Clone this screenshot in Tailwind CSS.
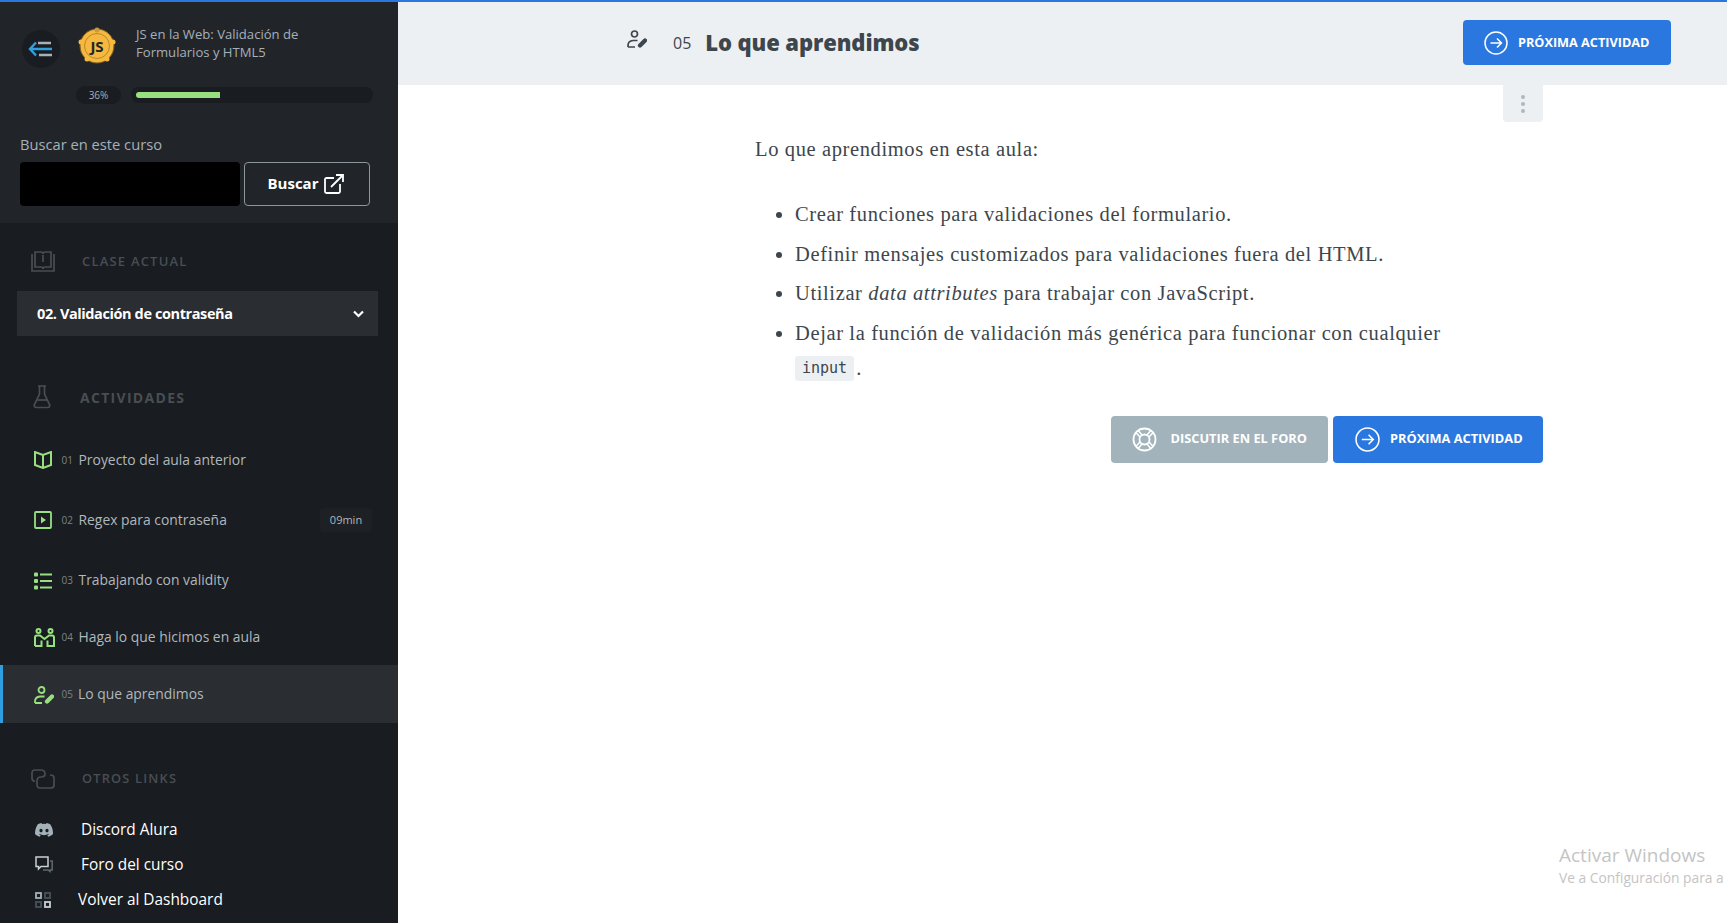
<!DOCTYPE html>
<html lang="es">
<head>
    <meta charset="UTF-8">
    <meta name="viewport" content="width=device-width, initial-scale=1.0">
    <title>Lo que aprendimos</title>
    <script src="https://cdn.jsdelivr.net/npm/@tailwindcss/browser@4"></script>
</head>
<body class="relative h-[923px] overflow-hidden bg-white font-['Open_Sans',sans-serif]">
    <div class="h-[2px] bg-[#2a77e0]"></div>
    <div class="flex h-[921px]">
        <!-- Sidebar -->
        <aside class="w-[398px] shrink-0 bg-[#191c20] flex flex-col">
            <div class="h-[221px] bg-[#21252a] pt-[28px]">
                <div class="flex items-center pl-[22px]">
                    <div class="w-[38px] h-[38px] rounded-full bg-[#191c20] flex items-center justify-center">
                        <svg width="26" height="16" viewBox="0 0 26 16" fill="none" stroke-width="2.4">
                            <path d="M8 1.5 2 8l6 6.5M2 8h22" stroke="#2f9fe0"/>
                            <path d="M10 2h13M11 14h13" stroke="#a3b1b9"/>
                        </svg>
                    </div>
                    <svg class="ml-[17px] self-start -mt-[4px]" width="40" height="40" viewBox="0 0 40 40">
                        <circle cx="20" cy="20" r="17" fill="#f6b83f" stroke="#7a5a1e" stroke-width="1"/>
                        <circle cx="20" cy="4" r="2.5" fill="#c79a45"/>
                        <circle cx="4" cy="16" r="2.5" fill="#f6b83f"/>
                        <circle cx="36" cy="16" r="2.5" fill="#f6b83f"/>
                        <circle cx="10" cy="33" r="2.5" fill="#f6b83f"/>
                        <circle cx="30" cy="33" r="2.5" fill="#f6b83f"/>
                        <circle cx="20" cy="20" r="12.5" fill="none" stroke="#a97c25" stroke-width="0.8"/>
                        <text x="20" y="25.500" text-anchor="middle" font-family="Open Sans" font-weight="700" font-size="15" fill="#21252a">JS</text>
                    </svg>
                    <p class="ml-[19px] self-start -mt-[5px] w-[200px] text-[13.1px] leading-[18px] text-[#a5b0b8]">JS en la Web: Validación de Formularios y HTML5</p>
                </div>
                <div class="flex items-center mt-[18px] pl-[76px]">
                    <div class="w-[45px] h-[18px] rounded-full bg-[#191c20] text-[10px] leading-[18px] text-center text-[#a5b0b8]">36%</div>
                    <div class="ml-[10px] w-[242px] h-[16px] rounded-full bg-[#191c20] flex items-center pl-[5px]">
                        <div class="w-[84px] h-[6px] rounded-l-full bg-[#98e07f]"></div>
                    </div>
                </div>
                <label class="block mt-[30px] ml-[20px] text-[14.7px] leading-[20px] text-[#a5b0b8]">Buscar en este curso</label>
                <div class="flex mt-[8px] ml-[20px] gap-[4px]">
                    <div class="w-[220px] h-[44px] rounded-[4px] bg-black"></div>
                    <button class="w-[126px] h-[44px] rounded-[4px] border border-[#8b969d] flex items-center justify-center gap-[6px] pr-[2px] pb-[1px] text-white text-[15px] font-bold">
                        Buscar
                        <svg width="20" height="20" viewBox="0 0 20 20" fill="none" stroke="#fff" stroke-width="1.8">
                            <path d="M10 4H2.5A1.5 1.5 0 0 0 1 5.500V17.500A1.500 1.500 0 0 0 2.500 19H14.500A1.500 1.500 0 0 0 16 17.500V10"/>
                            <path d="M7 13 19 1M12 1h7v7"/>
                        </svg>
                    </button>
                </div>
            </div>

            <!-- Clase actual -->
            <div class="flex items-center h-[24px] mt-[27px] pl-[31px]">
                <svg width="24" height="22" viewBox="0 0 24 22" fill="none" stroke="#484e53" stroke-width="1.7">
                    <path d="M1 3v17h22V3"/>
                    <path d="M4 1h6a2 2 0 0 1 2 2 2 2 0 0 1 2-2h6v15h-6a2 2 0 0 0-2 2 2 2 0 0 0-2-2H4z"/>
                    <path d="M12 4v7"/>
                </svg>
                <span class="ml-[27px] text-[13px] font-semibold tracking-[1.2px] text-[#484e53]">CLASE ACTUAL</span>
            </div>
            <div class="mt-[17px] ml-[17px] w-[361px] h-[45px] bg-[#2a2d31] flex items-center justify-between pl-[20px] pr-[14px] text-white">
                <span class="text-[14.5px] font-bold tracking-[-0.4px]">02. Validación de contraseña</span>
                <svg width="11" height="8" viewBox="0 0 11 8" fill="none" stroke="#fff" stroke-width="2.200"><path d="M1 1.500 5.500 6 10 1.500"/></svg>
            </div>

            <!-- Actividades -->
            <div class="flex items-center h-[26px] mt-[48px] pl-[33px]">
                <svg width="18" height="24" viewBox="0 0 18 24" fill="none" stroke="#484e53" stroke-width="1.700">
                    <path d="M5 1h8M6.500 1v8L1.500 19.500A2 2 0 0 0 3.300 22.500H14.700A2 2 0 0 0 16.500 19.500L11.500 9V1"/>
                    <path d="M4 15h10"/>
                </svg>
                <span class="ml-[29px] text-[14px] font-bold tracking-[1.3px] text-[#484e53]">ACTIVIDADES</span>
            </div>

            <ul class="mt-[20px] text-[13.9px] text-[#b0b8bd]">
                <li class="h-[60px] flex items-center pl-[34px]">
                    <svg class="w-[18px]" width="18" height="18" viewBox="0 0 18 18" fill="none" stroke="#98e07f" stroke-width="2"><path d="M9 4 1 1v13l8 3 8-3V1zM9 4v13"/></svg>
                    <span class="w-[17px] ml-[9.500px] text-[10px] text-[#7b8489]">01</span>
                    <span>Proyecto del aula anterior</span>
                </li>
                <li class="h-[60px] flex items-center pl-[34px] pr-[26px]">
                    <svg class="w-[18px]" width="18" height="18" viewBox="0 0 18 18" fill="none" stroke="#98e07f" stroke-width="1.800"><rect x="1" y="1" width="16" height="16" rx="1"/><path d="M7 5.500v7l5-3.500z" fill="#98e07f" stroke="none"/></svg>
                    <span class="w-[17px] ml-[9.500px] text-[10px] text-[#7b8489]">02</span>
                    <span>Regex para contraseña</span>
                    <span class="ml-auto w-[52px] h-[24px] rounded bg-[#1d2024] text-[11px] leading-[24px] text-center">09min</span>
                </li>
                <li class="h-[59px] flex items-center pl-[34px] pt-[2px]">
                    <svg class="w-[18px]" width="18" height="18" viewBox="0 0 18 18" fill="#98e07f"><rect x="0" y="0.500" width="4" height="4" rx="1"/><rect x="0" y="7" width="4" height="4" rx="1"/><rect x="0" y="13.500" width="4" height="4" rx="1"/><rect x="6" y="1.500" width="12" height="2"/><rect x="6" y="8" width="12" height="2"/><rect x="6" y="14.500" width="12" height="2"/></svg>
                    <span class="w-[17px] ml-[9.500px] text-[10px] text-[#7b8489]">03</span>
                    <span>Trabajando con validity</span>
                </li>
                <li class="h-[56px] flex items-center pl-[34px]">
                    <svg class="w-[21px] -mr-[3px]" width="21" height="19" viewBox="0 0 21 19" fill="none" stroke="#98e07f" stroke-width="2"><circle cx="4.500" cy="3" r="2"/><circle cx="16.500" cy="3" r="2"/><path d="M1 18V9.500Q1 7.500 3 7.500H6L10.500 11 15 7.500H18Q20 7.500 20 9.500V18H13.500V12.500M1 18H7.500V12.500"/></svg>
                    <span class="w-[17px] ml-[9.500px] text-[10px] text-[#7b8489]">04</span>
                    <span>Haga lo que hicimos en aula</span>
                </li>
                <li class="h-[58px] flex items-center pl-[31px] pt-[1px] bg-[#2a2d31] border-l-[3px] border-[#2f9fe0]">
                    <svg class="w-[20px] -mr-[2px]" width="20" height="18" viewBox="0 0 20 18" fill="none" stroke="#98e07f" stroke-width="1.800"><circle cx="7.500" cy="4" r="3"/><path d="M1 17v-1.500Q1 11 6 10.500h4.500M1 17h7"/><path d="M13 15.500 18 10.500" stroke-width="4.200" stroke-linecap="round"/></svg>
                    <span class="w-[16.500px] ml-[9.500px] text-[10px] text-[#7b8489]">05</span>
                    <span>Lo que aprendimos</span>
                </li>
            </ul>

            <!-- Otros links -->
            <div class="flex items-center h-[24px] mt-[44px] pl-[31px]">
                <svg width="24" height="21" viewBox="0 0 24 21" fill="none" stroke="#484e53" stroke-width="1.700">
                    <path d="M4 12.500Q1 12 1 9V4Q1 1 4 1h6Q14 1 14 5 14 8 10 8 6 8 6 12V15Q6 19 9 19H20Q23 19 23 16V9Q23 6 19 6"/>
                </svg>
                <span class="ml-[27px] text-[12.800px] font-semibold tracking-[1.200px] text-[#484e53]">OTROS LINKS</span>
            </div>
            <ul class="mt-[21px] text-[15.400px] font-medium text-white">
                <li class="h-[35px] flex items-center pl-[35px]">
                    <svg class="w-[18px]" width="18" height="14" viewBox="0 0 18 14" fill="#a3b1b9"><path d="M15.200 1.200A15 15 0 0 0 11.500 0l-.5 1a14 14 0 0 0-4 0L6.500 0a15 15 0 0 0-3.700 1.200C.5 4.700-.2 8 .1 11.300A15 15 0 0 0 4.700 13.700l1-1.500-1.600-.8.4-.3a10.500 10.500 0 0 0 9 0l.4.300-1.600.8 1 1.500a15 15 0 0 0 4.600-2.400c.4-3.800-.6-7.100-2.700-10.100zM6 9.300c-.9 0-1.600-.8-1.600-1.800S5.100 5.700 6 5.700s1.600.8 1.600 1.800S6.900 9.300 6 9.300zm6 0c-.9 0-1.600-.8-1.600-1.800s.7-1.800 1.600-1.800 1.600.8 1.600 1.800-.7 1.800-1.600 1.800z"/></svg>
                    <span class="ml-[28px]">Discord Alura</span>
                </li>
                <li class="h-[35px] flex items-center pl-[35px]">
                    <svg class="w-[18px]" width="18" height="18" viewBox="0 0 18 18" fill="none" stroke-width="1.500"><path d="M1 1h12v9.500H6L3.500 13v-2.500H1z" stroke="#c8d1d6"/><path d="M15 5h2.200v9H15v1.500L13 14H8" stroke="#5f696f"/></svg>
                    <span class="ml-[28px]">Foro del curso</span>
                </li>
                <li class="h-[35px] flex items-center pl-[35px]">
                    <svg class="w-[16px]" width="16" height="16" viewBox="0 0 16 16" fill="none" stroke-width="1.800"><rect x="1" y="1" width="5" height="5" stroke="#a3b1b9"/><rect x="10" y="1" width="5" height="5" stroke="#4a5257"/><rect x="1" y="10" width="5" height="5" stroke="#4a5257"/><rect x="10" y="10" width="5" height="5" stroke="#c8d1d6"/></svg>
                    <span class="ml-[27px]">Volver al Dashboard</span>
                </li>
            </ul>
        </aside>

        <!-- Main -->
        <main class="flex-1 min-w-0">
            <header class="h-[83px] bg-[#edf0f2] flex items-center pl-[229px] pr-[56px] pb-[2px] text-[#3d464d]">
                <svg class="-mt-[8px]" width="20" height="18" viewBox="0 0 20 18" fill="none" stroke="#3d464d" stroke-width="1.700"><circle cx="7.500" cy="4" r="3"/><path d="M1 17v-1.500Q1 11 6 10.500h4.500M1 17h7"/><path d="M13 15.500 18 10.500" stroke-width="4.200" stroke-linecap="round"/></svg>
                <span class="ml-[26px] text-[16px]">05</span>
                <h1 class="ml-[14px] text-[22px] font-extrabold tracking-[-0.1px]">Lo que aprendimos</h1>
                <a class="ml-auto w-[208px] h-[45px] rounded-[4px] bg-[#2a77e0] flex items-center pl-[21px] text-white text-[12.700px] font-bold">
                    <svg width="24" height="24" viewBox="0 0 24 24" fill="none" stroke="#fff" stroke-width="1.500"><circle cx="12" cy="12" r="11"/><path d="M6.500 12h11M13 7.500l4.500 4.500-4.500 4.500"/></svg>
                    <span class="ml-[10px]">PRÓXIMA ACTIVIDAD</span>
                </a>
            </header>
            <div class="ml-[357px] w-[788px]">
                <div class="flex justify-end">
                    <div class="w-[40px] h-[37px] rounded-b bg-[#edf0f2] flex flex-col items-center justify-center gap-[3px]">
                        <span class="w-1 h-1 rounded-full bg-[#adb7bd]"></span>
                        <span class="w-1 h-1 rounded-full bg-[#adb7bd]"></span>
                        <span class="w-1 h-1 rounded-full bg-[#adb7bd]"></span>
                    </div>
                </div>
                <div class="font-['Liberation_Serif',serif] text-[20.500px] tracking-[0.62px] text-[#3d464d]">
                    <p class="mt-[12px] leading-[30px]">Lo que aprendimos en esta aula:</p>
                    <ul class="mt-[33px] pl-[40px] list-disc leading-[35px] space-y-[4.500px]">
                        <li>Crear funciones para validaciones del formulario.</li>
                        <li>Definir mensajes customizados para validaciones fuera del HTML.</li>
                        <li>Utilizar <em>data attributes</em> para trabajar con JavaScript.</li>
                        <li>Dejar la función de validación más genérica para funcionar con cualquier<br><code class="inline-block -translate-y-[2px] font-['DejaVu_Sans_Mono',monospace] text-[15px] leading-[25px] tracking-normal bg-[#edf0f2] rounded-[3px] px-[7px]">input</code><span class="ml-[2px]">.</span></li>
                    </ul>
                </div>
                <div class="flex justify-end gap-[5px] mt-[30px] text-white text-[12.800px] font-bold">
                    <a class="w-[217px] h-[47px] rounded-[4px] bg-[#a2b3bc] flex items-center pl-[21px]">
                        <svg width="25" height="25" viewBox="0 0 25 25" fill="none" stroke="#fff" stroke-width="1.800">
                            <path d="M5 4.500 9 9M20 4.500 16 9M5 20.500 9 16M20 20.500 16 16" stroke-width="4.400"/>
                            <path d="M5 4.500 9 9M20 4.500 16 9M5 20.500 9 16M20 20.500 16 16" stroke="#a2b3bc" stroke-width="1.400"/>
                            <circle cx="12.500" cy="12.500" r="11"/><circle cx="12.500" cy="12.500" r="5"/>
                        </svg>
                        <span class="ml-[13.500px]">DISCUTIR EN EL FORO</span>
                    </a>
                    <a class="w-[210px] h-[47px] rounded-[4px] bg-[#2a77e0] flex items-center pl-[22px]">
                        <svg width="25" height="25" viewBox="0 0 24 24" fill="none" stroke="#fff" stroke-width="1.500"><circle cx="12" cy="12" r="11"/><path d="M6.500 12h11M13 7.500l4.500 4.500-4.500 4.500"/></svg>
                        <span class="ml-[10px]">PRÓXIMA ACTIVIDAD</span>
                    </a>
                </div>
            </div>
        </main>
    </div>

    <!-- Windows watermark -->
    <div class="absolute left-[1559px] top-[843px] whitespace-nowrap text-[#c4c4c4]">
        <p class="text-[19px] leading-[24px]">Activar Windows</p>
        <p class="text-[13.800px] leading-[22px]">Ve a Configuración para a</p>
    </div>
</body>
</html>
